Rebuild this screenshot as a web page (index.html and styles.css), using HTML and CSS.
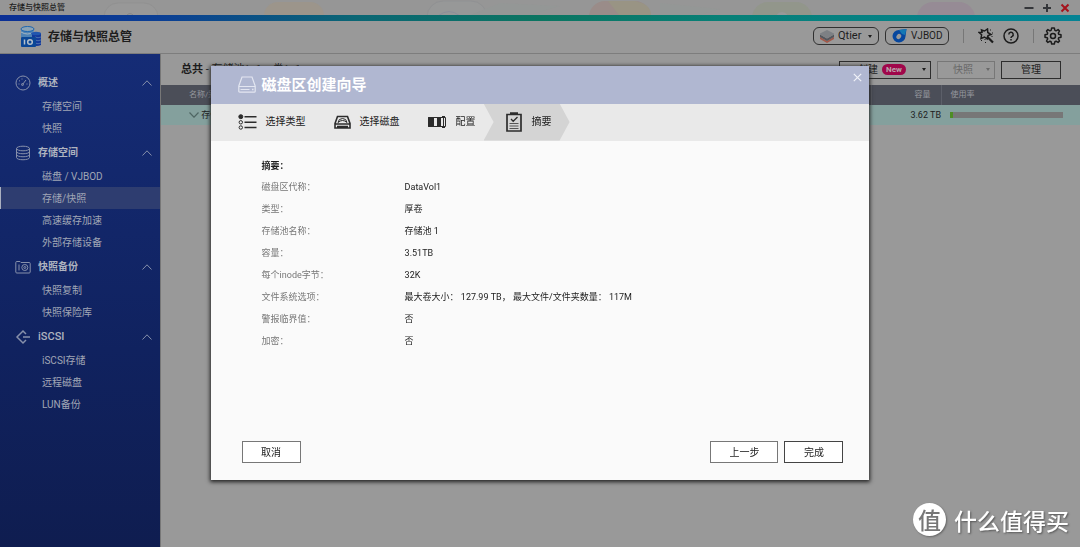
FILE: index.html
```html
<!DOCTYPE html>
<html lang="zh-CN">
<head>
<meta charset="utf-8">
<title>存储与快照总管</title>
<link rel="stylesheet" href="styles.css">
</head>
<body>
<div class="app">
  <div class="titlebar">
    <svg class="wallpaper" width="1080" height="15" viewBox="0 0 1080 15" aria-hidden="true">
      <rect x="104" y="3" width="54" height="40" rx="14" fill="#989898" stroke="#919191"/><path d="M126 16q4-5 8 0" stroke="#888" fill="none"/>
      <rect x="264" y="2" width="60" height="40" rx="14" fill="#9c958b"/>
      <rect x="427" y="1" width="60" height="40" rx="16" fill="#979898" stroke="#909193"/><path d="M438 16q11-9 22 0" stroke="#8c8e9b" fill="none"/>
      <rect x="589" y="1" width="62" height="40" rx="16" fill="#9a8c89"/><path d="M608 1h27q16 3 16 14h-32z" fill="#999484"/>
      <path d="M500 3l60 3-30 9h-60zM660 3l60 6-20 6h-40z" fill="#949796"/>
      <rect x="752" y="2" width="60" height="40" rx="16" fill="#92968b"/><circle cx="782" cy="18" r="6" fill="#999"/>
      <rect x="917" y="2" width="58" height="40" rx="16" fill="#968b95"/>
    </svg>
    <span class="titlebar-name">存储与快照总管</span>
    <div class="window-controls">
      <button class="bare" aria-label="最小化"><svg width="10" height="10" viewBox="0 0 10 10"><path d="M.5 5h9" stroke="#34363a" stroke-width="2"/></svg></button>
      <button class="bare" aria-label="最大化"><svg width="10" height="10" viewBox="0 0 10 10"><path d="M1 5h8M5 1v8" stroke="#34363a" stroke-width="2"/></svg></button>
      <button class="bare" aria-label="关闭"><svg width="10" height="10" viewBox="0 0 10 10"><path d="M1.500 1.500l7 7M8.500 1.500l-7 7" stroke="#a5121c" stroke-width="2"/></svg></button>
    </div>
  </div>
  <div class="accent"></div>
  <header class="header">
    <svg width="22" height="22" viewBox="0 0 22 22">
      <path d="M1 3v8h13V3z" fill="#4f83b5"/><ellipse cx="7.500" cy="3" rx="6.500" ry="2.500" fill="#8ba3b5" stroke="#1d66b0"/>
      <path d="M1 6q6.500 4 13 0" stroke="#a3b4c0" fill="none"/>
      <path d="M12 8v11q5 2 9 0V7z" fill="#12399a"/><ellipse cx="16" cy="7.500" rx="5" ry="1.800" fill="#2156ae"/>
      <path d="M15 11q3 1.500 6 0M15 14q3 1.500 6 0M15 17q3 1.500 6 0" stroke="#4b6fae" fill="none"/>
      <rect x="1" y="11" width="15" height="10" rx="1" fill="#0b4796"/>
      <path d="M4.500 13.500v5" stroke="#b5c0ca" stroke-width="1.500"/><circle cx="10" cy="16" r="2.300" fill="none" stroke="#b5c0ca" stroke-width="1.500"/>
    </svg>
    <h1 class="app-title">存储与快照总管</h1>
    <div class="header-tools">
      <button class="pill qtier">
        <svg width="14" height="14" viewBox="0 0 14 14"><path d="M0 8v2l7 4 7-4V8l-7 4z" fill="#a2594a"/><path d="M0 5.500V8l7 4 7-4V5.500l-7 4z" fill="#55575d"/><path d="M0 4.500L7 1l7 3.500v1L7 9.500 0 5.500z" fill="#7d8084"/></svg>
        <span>Qtier</span><i class="caret"></i>
      </button>
      <button class="pill vjbod">
        <svg width="15" height="14" viewBox="0 0 15 14"><path d="M14.500 0L13.500 7.500A6.500 6.200 0 1 1 7 1z" fill="#07479e"/><path d="M7 1l7.500-1-1.500 6-3-1z" fill="#1478b4"/><ellipse cx="6.800" cy="7.500" rx="2.200" ry="2.800" transform="rotate(35 6.800 7.500)" fill="#999"/></svg>
        <span>VJBOD</span>
      </button>
      <i class="divider"></i>
      <button class="bare" aria-label="工具"><svg width="16" height="16" viewBox="0 0 16 16" fill="none" stroke="#1c1c1c"><path d="M3.500 2l3 1L9.500 1l.3 3.500L13 6.500 10 7.500 9.200 11 6.500 9 3 10.500l.6-3.700L1 4.500l3-.2z" stroke-width="1.500"/><path d="M9 8.500l6 6" stroke-width="2.200"/><path d="M12 2h1M14 5h1M13.500 8.500h1M3 12.500h1M6.500 11.500h1M7 14.500h1" stroke-width="1.200"/></svg></button>
      <button class="bare help" aria-label="帮助"><svg width="16" height="16" viewBox="0 0 16 16" fill="none" stroke="#1c1c1c" stroke-width="1.500"><circle cx="8" cy="8" r="7"/><path d="M5.800 6.500a2.200 2.200 0 1 1 3.300 1.900Q8 9 8 10M8 11v1.400"/></svg></button>
      <i class="divider"></i>
      <button class="bare" aria-label="设置"><svg width="18" height="18" viewBox="0 0 18 18" fill="none" stroke="#1c1c1c" stroke-width="1.500" stroke-linejoin="round"><path d="M7.700 1h2.600l.6 2.400 1.100.4 2.100-1.200 1.400 1.400-1.200 2.100.4 1.100 2.300.5v2.600l-2.300.5-.4 1.100 1.200 2.100-1.400 1.400-2.100-1.200-1.100.4-.6 2.400H7.700l-.6-2.400-1.100-.4-2.100 1.200L2.500 14l1.200-2.100-.4-1.100L1 10.300V7.700l2.300-.5.4-1.100L2.500 4l1.400-1.400L6 3.800l1.100-.4z"/><circle cx="9" cy="9" r="2.500"/></svg></button>
    </div>
  </header>
  <div class="body">
    <nav class="sidebar">
      <button class="group"><svg width="16" height="16" viewBox="0 0 16 16"><circle cx="8" cy="8" r="7"/><path d="M3.500 9h1M4 5.500l1 .7M7 3.500v1M11.500 9h1M7.500 9.500L11 5"/><circle cx="7.500" cy="9.500" r="1"/></svg><b>概述</b><svg class="chev" width="10" height="6" viewBox="0 0 10 6"><path d="M.5 5.500L5 .8l4.500 4.700"/></svg></button>
      <a class="item" href="#">存储空间</a>
      <a class="item" href="#">快照</a>
      <button class="group"><svg width="16" height="16" viewBox="0 0 16 16"><ellipse cx="8" cy="3.500" rx="6.500" ry="2.300"/><path d="M1.500 3.500v9c0 3 13 3 13 0v-9M1.500 6.500c0 3 13 3 13 0M1.500 9.500c0 3 13 3 13 0"/></svg><b>存储空间</b><svg class="chev" width="10" height="6" viewBox="0 0 10 6"><path d="M.5 5.500L5 .8l4.500 4.700"/></svg></button>
      <a class="item" href="#">磁盘 / VJBOD</a>
      <a class="item active" href="#">存储/快照</a>
      <a class="item" href="#">高速缓存加速</a>
      <a class="item" href="#">外部存储设备</a>
      <button class="group"><svg width="16" height="16" viewBox="0 0 16 16"><path d="M.8 3.500q0-1 1-1H5l1 1h8.200q1 0 1 1V13q0 1-1 1H1.800q-1 0-1-1zM4 5.500v6"/><circle cx="9.800" cy="8.500" r="3"/><circle cx="9.800" cy="8.500" r="1"/></svg><b>快照备份</b><svg class="chev" width="10" height="6" viewBox="0 0 10 6"><path d="M.5 5.500L5 .8l4.500 4.700"/></svg></button>
      <a class="item" href="#">快照复制</a>
      <a class="item" href="#">快照保险库</a>
      <button class="group"><svg width="16" height="16" viewBox="0 0 16 16"><path d="M11 5L8 2 2 8l6 6 3-3M8 8h7" stroke-width="1.500"/></svg><b class="latin">iSCSI</b><svg class="chev" width="10" height="6" viewBox="0 0 10 6"><path d="M.5 5.500L5 .8l4.500 4.700"/></svg></button>
      <a class="item" href="#">iSCSI存储</a>
      <a class="item" href="#">远程磁盘</a>
      <a class="item" href="#">LUN备份</a>
    </nav>
    <main class="main">
      <div class="toolbar">
        <div class="total"><b>总共</b> - 存储池：1，卷：1</div>
        <div class="actions">
          <button class="box create"><span>创建</span><em class="new">New</em><i class="caret"></i></button>
          <button class="box snap" disabled><span>快照</span><i class="caret"></i></button>
          <button class="box manage">管理</button>
        </div>
      </div>
      <table class="pools">
        <thead><tr><th class="name">名称/别名</th><th class="cap">容量</th><th class="use">使用率</th></tr></thead>
        <tbody><tr><td class="name"><svg width="10" height="6" viewBox="0 0 10 6"><path d="M.5.5L5 5.200 9.500.5" fill="none" stroke="#4f6663" stroke-width="1.200"/></svg> 存储池 1</td><td class="cap">3.62 TB</td><td class="use"><div class="bar"><div class="fill"></div></div></td></tr></tbody>
      </table>
    </main>
  </div>
</div>

<div class="overlay">
  <section class="dialog" role="dialog" aria-labelledby="wizard-title">
    <div class="dialog-head">
      <svg width="18" height="17" viewBox="0 0 18 17" fill="none" stroke="#e3e6f1" stroke-width="1.200"><path d="M.8 10L4 1h10l3.200 9v5.200q0 1-1 1H1.800q-1 0-1-1zM.8 10.500h16.400M2.500 13.500h9"/><path d="M14 13.500h1.500" stroke-width="1.600"/></svg>
      <h2 id="wizard-title" class="dialog-title">磁盘区创建向导</h2>
      <button class="bare close" aria-label="关闭"><svg width="9" height="9" viewBox="0 0 9 9"><path d="M.8.8l7.400 7.400M8.200.8L.8 8.200" stroke="#f0f2f8" stroke-width="1.200"/></svg></button>
    </div>
    <ol class="steps">
      <li class="step type"><svg width="19" height="16" viewBox="0 0 19 16" fill="none" stroke="#2c2c2c"><circle cx="2.800" cy="2.700" r="2" fill="#2c2c2c"/><circle cx="2.800" cy="8.300" r="1.700"/><circle cx="2.800" cy="13.500" r="1.700"/><path d="M6.500 2.700H18.500M6.500 8.300H18.500M6.500 13.500H18.500" stroke-width="1.500"/></svg>选择类型</li>
      <li class="step disk"><svg width="17" height="15" viewBox="0 0 17 15" fill="none" stroke="#2c2c2c" stroke-width="1.600"><path d="M1 8.500L3.500 1.500h10L16 8.500V13H1zM1 9h15M3 11.500h11"/><path d="M4 7.500q.5-4 4.500-4t4.500 4q-2-2-4.500-2T4 7.500z" stroke-width="1"/></svg>选择磁盘</li>
      <li class="step conf"><svg width="19" height="12" viewBox="0 0 19 12" fill="none" stroke="#2c2c2c"><path d="M.5 1.500h17v9H.5z"/><path d="M.5 1.500h5v9h-5zM9.500 1.500h3v9h-3z" fill="#2c2c2c"/><path d="M15.500 0v12M14 .5h3M14 11.500h3"/></svg>配置</li>
      <li class="step summary"><svg width="16" height="20" viewBox="0 0 16 20" fill="none" stroke="#2c2c2c"><path d="M1 2.500h14v16.500H1z" stroke-width="1.700"/><path d="M4 1.200h8" stroke-width="2"/><path d="M5 7l2.200 2.300L11.500 5" stroke-width="1.300"/><path d="M3.500 11.500h9M3.500 14h9M3.500 16.500h9" stroke="#555"/></svg>摘要</li>
    </ol>
    <div class="dialog-body">
      <h3 class="summary-title">摘要：</h3>
      <dl class="facts">
        <dt>磁盘区代称：</dt><dd>DataVol1</dd>
        <dt>类型：</dt><dd>厚卷</dd>
        <dt>存储池名称：</dt><dd>存储池 1</dd>
        <dt>容量：</dt><dd>3.51TB</dd>
        <dt>每个inode字节：</dt><dd>32K</dd>
        <dt>文件系统选项：</dt><dd>最大卷大小： 127.99 TB， 最大文件/文件夹数量： 117M</dd>
        <dt>警报临界值：</dt><dd>否</dd>
        <dt>加密：</dt><dd>否</dd>
      </dl>
    </div>
    <div class="dialog-foot">
      <button class="btn cancel">取消</button>
      <button class="btn back">上一步</button>
      <button class="btn finish">完成</button>
    </div>
  </section>
</div>
<div class="watermark"><span class="seal">值</span><span>什么值得买</span></div>
</body>
</html>
```
FILE: styles.css
```css
* { box-sizing: border-box; }
body {
  margin: 0;
  font: 10px/14px Roboto, "Noto Sans CJK SC", sans-serif;
  color: #1d1d1d;
  background: #999;
}
button { font: inherit; color: inherit; cursor: pointer; padding: 0; margin: 0; }
svg { display: block; flex: none; }
h1, h2, h3, ol, dl, dd { margin: 0; padding: 0; }
.bare { background: none; border: 0; display: flex; }

.app { min-height: 100vh; display: flex; flex-direction: column; }

.titlebar {
  position: relative;
  overflow: hidden;
  height: 15px;
  display: flex;
  align-items: center;
  justify-content: space-between;
  padding: 0 10px 0 9px;
  background: #969696;
}
.wallpaper { position: absolute; left: 0; top: 0; }
.titlebar-name { position: relative; font-size: 8px; font-weight: 500; }
.window-controls { position: relative; display: flex; gap: 8px; }
.accent {
  height: 6px;
  background: linear-gradient(90deg, #0b2f94 0%, #0b3f94 15%, #0a6674 33%, #0b7561 50%, #078077 67%, #058394 100%);
}
.header {
  height: 33px;
  display: flex;
  align-items: center;
  gap: 6px;
  padding: 0 18px 0 20px;
  border-bottom: 1px solid #7d7d7d;
}
.app-title { font-size: 12px; line-height: 18px; font-weight: 700; }
.header-tools { margin-left: auto; display: flex; align-items: center; padding-bottom: 2px; }
.pill {
  height: 18px;
  display: flex;
  align-items: center;
  gap: 4px;
  padding: 0 6px;
  background: none;
  border: 1px solid #303030;
  border-radius: 6px;
  font-size: 11px;
}
.qtier { width: 66px; margin-right: 6px; }
.vjbod { width: 64px; font-size: 10px; }
.caret {
  margin-left: auto;
  border: 2px solid transparent;
  border-top: 3px solid currentColor;
  border-bottom: 0;
}
.divider { width: 1px; height: 14px; background: #777; margin: 0 14px; }
.help { margin-left: 9px; }
.header-tools .divider:last-of-type { margin-right: 10px; }

.body { flex: 1; display: flex; }
.sidebar {
  width: 161px;
  flex: none;
  padding-top: 15px;
  background: linear-gradient(#152c76, #10225f 60%, #0f1d50);
  border-right: 1px solid #777;
  color: #a0a6b5;
}
.group {
  width: 100%;
  height: 26px;
  display: flex;
  align-items: center;
  gap: 7px;
  padding: 1px 8px 0 15px;
  border: 0;
  background: none;
  color: #aeb3bf;
}
.group svg { fill: none; stroke: #8790ab; }
.latin { font-weight: 500; font-size: 11px; }
.chev { margin-left: auto; }
.item {
  height: 22px;
  display: flex;
  align-items: center;
  padding: 2px 0 0 42px;
  color: inherit;
  text-decoration: none;
}
.active { background: #2e3d70; box-shadow: inset 1px 0 #aab0c0; }

.main { flex: 1; min-width: 0; }
.toolbar { height: 31px; display: flex; align-items: center; justify-content: space-between; padding: 0 19px 0 20px; }
.total { font-size: 11px; }
.actions { display: flex; gap: 6px; }
.box {
  height: 18px;
  display: flex;
  align-items: center;
  padding: 0 4px;
  border: 1px solid #2d2d2d;
  background: none;
}
.create { width: 92px; padding-left: 18px; gap: 4px; }
.snap { width: 58px; padding-left: 15px; color: #696969; border-color: #777; }
.manage { width: 60px; justify-content: center; }
.new {
  padding: 0 4px;
  font: 700 8px/11px Roboto, sans-serif;
  color: #b8a5ac;
  background: #a0064a;
  border-radius: 6px;
}

.pools { width: 100%; border-collapse: collapse; table-layout: fixed; font-size: 9px; }
.pools th { height: 20px; padding: 0; background: #4b4e58; color: #96989f; font-weight: 400; font-size: 8px; text-align: left; }
.pools td { height: 20px; padding: 0; background: #84a09d; }
.pools .name { padding-left: 28px; }
.pools .cap { width: 70px; text-align: right; }
.pools th.cap { border-left: 1px solid #5c5f69; border-right: 1px solid #5c5f69; padding-right: 10px; }
.pools .use { width: 139px; padding-left: 9px; padding-right: 17px; }
.pools td svg { display: inline-block; }
.bar { height: 6px; background: #777; }
.fill { width: 3%; height: 100%; background: #4d8d25; }

.overlay { position: fixed; inset: 0; display: flex; align-items: center; justify-content: center; padding-bottom: 1px; }
.dialog {
  width: 61%;
  min-height: 76%;
  display: flex;
  flex-direction: column;
  background: #fafafa;
  box-shadow: 0 1px 4px 1px #222;
}
.dialog-head { height: 38px; display: flex; align-items: center; gap: 6px; padding: 0 7px 0 27px; background: #b0b7d1; }
.dialog-title { font-size: 15px; line-height: 22px; font-weight: 700; color: #fff; }
.close { margin-left: auto; align-self: flex-start; padding-top: 7px; }
.steps { height: 37px; display: flex; list-style: none; background: #e9e9e9; padding-left: 27px; }
.step { display: flex; align-items: center; gap: 9px; }
.type { width: 96px; }
.disk { width: 94px; }
.conf { width: 56px; white-space: nowrap; }
.summary {
  width: 86px;
  padding-left: 22px;
  gap: 10px;
  background: #d4d4d4;
  clip-path: polygon(0 0, 76px 0, 100% 50%, 76px 100%, 0 100%, 10px 50%);
}
.dialog-body { flex: 1; padding: 17px 51px; font-size: 9px; }
.summary-title { font-size: 9px; line-height: 16px; }
.facts { display: grid; grid-template-columns: 143px 1fr; line-height: 22px; padding-top: 2px; }
.facts dt { color: #777; }
.facts dd { color: #222; }
.dialog-foot { display: flex; gap: 6px; padding: 0 26px 17px 31px; }
.btn { width: 59px; height: 22px; padding-top: 1px; border: 1px solid #777; background: #fff; color: #222; }
.cancel { margin-right: auto; }
.back { width: 68px; }
.finish { border-color: #444; }

.watermark {
  position: fixed;
  right: 11px;
  bottom: 11px;
  display: flex;
  align-items: center;
  gap: 8px;
  font: 500 23px/32px "Noto Sans CJK SC", sans-serif;
  color: #fff;
  text-shadow: 1px 1px 2px #555;
}
.seal {
  width: 33px;
  height: 33px;
  border-radius: 50%;
  background: #fff;
  color: #777;
  text-align: center;
  text-shadow: none;
  box-shadow: 1px 1px 2px #666;
}
```
